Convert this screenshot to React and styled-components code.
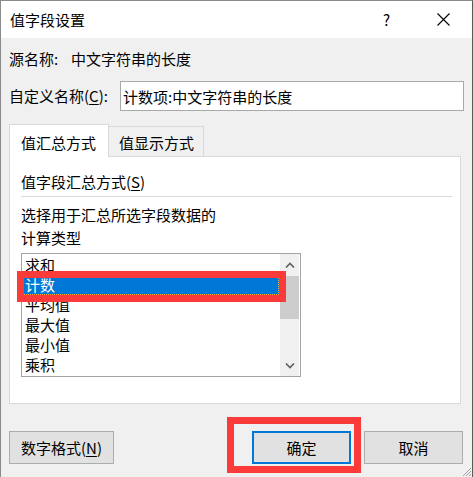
import React from "react";
import styled, { createGlobalStyle } from "styled-components";

const GlobalStyle = createGlobalStyle`
  html, body {
    margin: 0;
    padding: 0;
    background: #f0f0f0;
  }
  * {
    box-sizing: border-box;
  }
`;

const Window = styled.div`
  position: relative;
  width: 473px;
  height: 477px;
  background: #f0f0f0;
  border-top: 1px solid #8a8a8a;
  border-left: 1px solid #8a8a8a;
  border-right: 1px solid #5a5a5a;
  font-family: "Noto Sans CJK SC", "Microsoft YaHei", sans-serif;
  font-size: 15px;
  line-height: 20px;
  color: #000;
  overflow: hidden;
`;

const TitleBar = styled.div`
  display: flex;
  align-items: center;
  height: 37px;
  background: #fff;
  padding-left: 9px;
`;

const Title = styled.div`
  flex: 1;
`;

const CaptionButton = styled.div`
  width: 57px;
  height: 37px;
  display: flex;
  align-items: center;
  justify-content: center;
  font-size: 15px;
`;

const Body = styled.div`
  padding: 0 8px;
`;

const SourceRow = styled.div`
  display: flex;
  margin-top: 11px;
  height: 20px;
`;

const Label = styled.div`
  width: ${(p) => p.$width}px;
  flex-shrink: 0;
`;

const NameRow = styled.div`
  display: flex;
  align-items: center;
  margin-top: 12px;
  height: 30px;
`;

const NameInput = styled.input`
  flex: 1;
  height: 30px;
  border: 1px solid #a9a9a9;
  background: #fff;
  padding: 0 2px;
  font: inherit;
  color: #000;
  outline: none;
`;

const Mnemonic = styled.span`
  text-decoration: underline;
  text-underline-offset: 2px;
`;

const TabRow = styled.div`
  display: flex;
  align-items: flex-end;
  margin-top: 13px;
`;

const Tab = styled.div`
  position: relative;
  z-index: 1;
  width: ${(p) => (p.$active ? 100 : 95)}px;
  background: ${(p) => (p.$active ? "#fff" : "#f0f0f0")};
  border-top: 1px solid #d9d9d9;
  border-right: 1px solid #d9d9d9;
  border-left: ${(p) => (p.$active ? "1px solid #d9d9d9" : "none")};
  padding: ${(p) => (p.$active ? "8px 0 4px 11px" : "6px 0 3px 10px")};
  margin-bottom: ${(p) => (p.$active ? "-1px" : "0")};
`;

const Panel = styled.div`
  width: 452px;
  background: #fff;
  border: 1px solid #d9d9d9;
  padding: 0 0 26px 11px;
`;

const SectionTitle = styled.div`
  margin-top: 15px;
`;

const Divider = styled.div`
  margin: 4px 8px 0 0;
  height: 1px;
  background: #d9d9d9;
`;

const Description = styled.div`
  margin-top: 6px;
  line-height: 23px;
`;

const ListBox = styled.div`
  display: flex;
  margin-top: 4px;
  width: 280px;
  height: 124px;
  border: 1px solid #a3a3a3;
  background: #fff;
`;

const Items = styled.div`
  flex: 1;
  padding: 1px 1px 0 1px;
`;

const Item = styled.div`
  height: 20px;
  padding-left: 2px;
  background: ${(p) => (p.$selected ? "#0078d7" : "transparent")};
  color: ${(p) => (p.$selected ? "#fff" : "#000")};
  outline: ${(p) => (p.$selected ? "1px dotted #f3b03a" : "none")};
  outline-offset: -1px;
`;

const Scrollbar = styled.div`
  width: 19px;
  display: flex;
  flex-direction: column;
  background: #f0f0f0;
  margin-right: 1px;
`;

const ArrowButton = styled.div`
  height: 21px;
  display: flex;
  align-items: center;
  justify-content: center;
`;

const Track = styled.div`
  flex: 1;
  padding-top: 1px;
`;

const Thumb = styled.div`
  height: 43px;
  background: #cdcdcd;
`;

const ButtonBar = styled.div`
  display: flex;
  margin-top: 27px;
  padding-right: 1px;
`;

const Spacer = styled.div`
  flex: 1;
`;

const Button = styled.div`
  width: ${(p) => p.$width}px;
  height: 33px;
  margin-left: ${(p) => p.$gap || 0}px;
  display: flex;
  align-items: center;
  justify-content: center;
  background: #e1e1e1;
  border: ${(p) => (p.$default ? "2px solid #0078d7" : "1px solid #adadad")};
`;

const Highlight = styled.div`
  position: absolute;
  left: ${(p) => p.$x}px;
  top: ${(p) => p.$y}px;
  width: ${(p) => p.$w}px;
  height: ${(p) => p.$h}px;
  border: 7px solid #fb3a3a;
  pointer-events: none;
`;

const Grip = styled.svg`
  position: absolute;
  right: 0;
  bottom: 0;
`;

const Chevron = ({ up }) => (
  <svg width="10" height="6" viewBox="0 0 10 6">
    <path
      d={up ? "M1 5.5 L5 1.5 L9 5.5" : "M1 0.5 L5 4.5 L9 0.5"}
      fill="none"
      stroke="#606060"
      strokeWidth="1.6"
    />
  </svg>
);

const items = ["求和", "计数", "平均值", "最大值", "最小值", "乘积"];

export default function App() {
  return (
    <>
      <GlobalStyle />
      <Window>
        <TitleBar>
          <Title>值字段设置</Title>
          <CaptionButton>?</CaptionButton>
          <CaptionButton>
            <svg width="13" height="13" viewBox="0 0 13 13">
              <path d="M0.5 0.5 L12.5 12.5 M12.5 0.5 L0.5 12.5" stroke="#000" strokeWidth="1.1" />
            </svg>
          </CaptionButton>
        </TitleBar>
        <Body>
          <SourceRow>
            <Label $width={62}>源名称:</Label>
            <div>中文字符串的长度</div>
          </SourceRow>
          <NameRow>
            <Label $width={111}>
              自定义名称(<Mnemonic>C</Mnemonic>):
            </Label>
            <NameInput defaultValue="计数项:中文字符串的长度" readOnly />
          </NameRow>
          <TabRow>
            <Tab $active>值汇总方式</Tab>
            <Tab>值显示方式</Tab>
          </TabRow>
          <Panel>
            <SectionTitle>
              值字段汇总方式(<Mnemonic>S</Mnemonic>)
            </SectionTitle>
            <Divider />
            <Description>
              选择用于汇总所选字段数据的
              <br />
              计算类型
            </Description>
            <ListBox>
              <Items>
                {items.map((t) => (
                  <Item key={t} $selected={t === "计数"}>
                    {t}
                  </Item>
                ))}
              </Items>
              <Scrollbar>
                <ArrowButton>
                  <Chevron up />
                </ArrowButton>
                <Track>
                  <Thumb />
                </Track>
                <ArrowButton>
                  <Chevron />
                </ArrowButton>
              </Scrollbar>
            </ListBox>
          </Panel>
          <ButtonBar>
            <Button $width={105}>
              数字格式(<Mnemonic>N</Mnemonic>)
            </Button>
            <Spacer />
            <Button $width={99} $default>
              确定
            </Button>
            <Button $width={99} $gap={13}>
              取消
            </Button>
          </ButtonBar>
        </Body>
        <Highlight $x={16} $y={270} $w={269} $h={31} />
        <Highlight $x={226} $y={416} $w={134} $h={56} />
        <Grip width="11" height="11" viewBox="0 0 11 11">
          <path d="M10 2 L2 10 M10 5 L5 10 M10 8 L8 10" stroke="#a0a0a0" strokeWidth="1" />
        </Grip>
      </Window>
    </>
  );
}
